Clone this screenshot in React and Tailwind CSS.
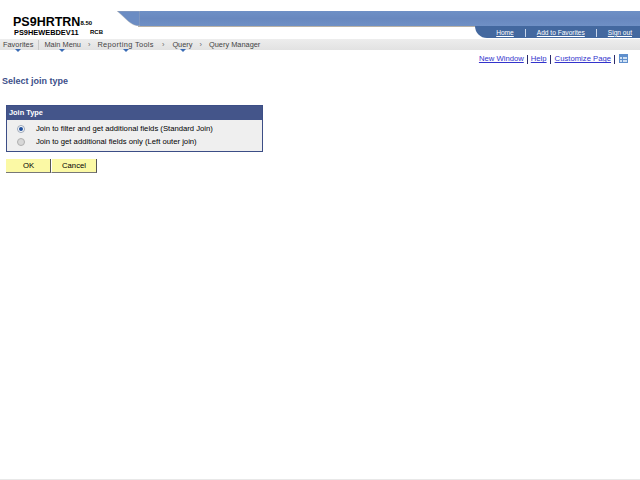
function Sep({ className = "mx-[3px]" }) {
  return <span className={"inline-block h-[9px] w-px bg-[#2b2b6b] " + className} />;
}

function NavItem({ label, arrow, className = "" }) {
  return (
    <span className={"relative whitespace-nowrap " + className}>
      {label}
      {arrow && (
        <span
          className="absolute top-[8px] h-0 w-0 border-x-[3px] border-t-[3px] border-x-transparent border-t-[#3a6cb5]"
          style={{ left: arrow }}
        />
      )}
    </span>
  );
}

export default function App() {
  return (
    <div className="h-[480px] w-[640px] overflow-hidden border-b border-[#e8e8e8] bg-white font-['Liberation_Sans',Arial,sans-serif] text-[7.7px] text-black">
      <header className="flex h-[39px]">
        <div className="w-[117px] shrink-0 pl-[13px] pt-[17px]">
          <div className="flex items-end leading-[11px]">
            <span className="text-[12.5px] font-bold">PS9HRTRN</span>
            <span className="mb-[1px] text-[6px] font-bold leading-[7px]">8.50</span>
          </div>
          <div className="flex pl-px text-[7.4px] font-bold leading-[9px]">
            <span className="w-[76px]">PS9HEWEBDEV11</span>
            <span className="text-[6px]">RCB</span>
          </div>
        </div>
        <div className="flex min-w-0 flex-1 flex-col pt-[11px]">
          <div className="flex h-[15px]">
            <svg width="23" height="15" viewBox="0 0 23 15" className="shrink-0">
              <path d="M0 0H23V15C13 15 10 8 0 0Z" fill="#6b8cc3" stroke="#c9c2b4" strokeWidth="0.4" />
            </svg>
            <div className="flex-1 bg-[linear-gradient(#6e90c6,#6888bf_50%,#6f90c5)]" />
          </div>
          <div className="flex h-[12px]">
            <div className="ml-[21px] flex-1 border-t border-[#b9b2a6]" />
            <div className="flex w-[165px] items-center justify-end rounded-bl-[12px] bg-[#43689f] pr-[8px] pt-[2px] text-[6.6px] leading-none text-white">
              <a className="underline">Home</a>
              <span className="mx-[11px] h-[8px] w-px bg-[#c9d6ea]" />
              <a className="underline">Add to Favorites</a>
              <span className="mx-[11px] h-[8px] w-px bg-[#c9d6ea]" />
              <a className="underline">Sign out</a>
            </div>
          </div>
        </div>
      </header>

      <nav className="flex h-[11px] items-center bg-[linear-gradient(#ededed,#e2e2e2)] pl-[3px] text-[7.4px] leading-none text-[#444]">
        <NavItem label="Favorites" arrow="12px" />
        <span className="mx-[5px] h-[10px] w-px bg-[#c8c8c8]" />
        <NavItem label="Main Menu" arrow="15px" />
        <span className="mx-[7px] text-[#666]">›</span>
        <NavItem label="Reporting Tools" arrow="26px" className="tracking-[0.35px]" />
        <span className="mx-[8px] text-[#666]">›</span>
        <NavItem label="Query" arrow="8px" />
        <span className="mx-[7px] text-[#666]">›</span>
        <NavItem label="Query Manager" />
      </nav>

      <div className="flex h-[18px] items-center justify-end pr-[12px] text-[#3333cc]">
        <a className="underline">New Window</a>
        <Sep />
        <a className="underline">Help</a>
        <Sep className="ml-[3px] mr-[4px]" />
        <a className="underline">Customize Page</a>
        <Sep />
        <svg width="9" height="9" viewBox="0 0 9 9" className="mb-[1px] ml-[1px]">
          <rect x="0" y="0" width="9" height="9" fill="#cfe0f3" />
          <rect x="0" y="0" width="9" height="3" fill="#5f8fcc" />
          <path d="M3.5 3V9M0 5.5H9M0 8.5H9M.5 0V9M8.5 0V9" stroke="#5f8fcc" strokeWidth="1" />
        </svg>
      </div>

      <h1 className="ml-[2px] mt-[7px] text-[9px] font-bold leading-[12px] text-[#3d4f8a]">Select join type</h1>

      <section className="ml-[6px] mt-[18px] w-[257px] border border-[#3c4e86] bg-[#efefef]">
        <div className="h-[14px] bg-[#44558a] pl-[2px] text-[7.4px] font-bold leading-[14px] text-white">Join Type</div>
        <div className="h-[31px] pt-[2px] leading-[13px]">
          <label className="flex h-[13px] items-center">
            <span className="ml-[10px] flex h-[8px] w-[8px] items-center justify-center rounded-full border border-[#9aa5b5] bg-white">
              <span className="h-[4px] w-[4px] rounded-full bg-[#1f4f9c]" />
            </span>
            <span className="ml-[11px]">Join to filter and get additional fields (Standard Join)</span>
          </label>
          <label className="flex h-[13px] items-center">
            <span className="ml-[10px] h-[8px] w-[8px] rounded-full border border-[#b0b0b0] bg-[#d8d8d8]" />
            <span className="ml-[11px]">Join to get additional fields only (Left outer join)</span>
          </label>
        </div>
      </section>

      <div className="ml-[6px] mt-[7px] flex">
        <button className="h-[14px] w-[45px] border-b border-r border-b-[#777] border-r-[#555] bg-[#fbf9a5] pl-px leading-[13px]">OK</button>
        <button className="h-[14px] w-[46px] border-b border-l border-r border-b-[#777] border-l-white border-r-[#555] bg-[#fbf9a5] leading-[13px]">Cancel</button>
      </div>
    </div>
  );
}
